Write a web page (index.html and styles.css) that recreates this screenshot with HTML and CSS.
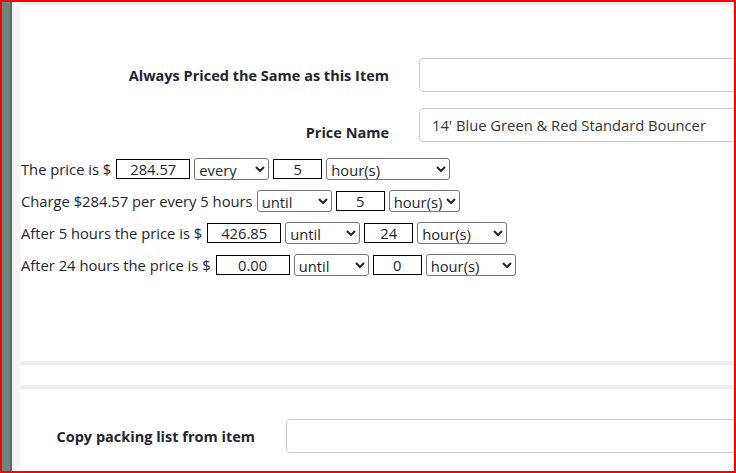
FILE: index.html
```html
<!DOCTYPE html>
<html lang="en">
<head>
    <meta charset="UTF-8">
    <title>Item Pricing</title>
    <link rel="stylesheet" href="styles.css">
</head>
<body>
    <div class="frame">
        <div class="rail"></div>
        <div class="main">
            <div class="panel">
                <div class="field-grid">
                    <label class="field-label">Always Priced the Same as this Item</label>
                    <input class="wide-input" type="text" value="">
                    <label class="field-label low">Price Name</label>
                    <input class="wide-input" type="text" value="14' Blue Green &amp; Red Standard Bouncer">
                </div>

                <div class="rates">
                    <div class="rate-row">
                        <span>The price is $</span>
                        <input class="price" type="text" value="284.57">
                        <select class="sel-every"><option>every</option></select>
                        <input class="qty" type="text" value="5">
                        <select class="sel-unit-long"><option>hour(s)</option></select>
                    </div>
                    <div class="rate-row">
                        <span>Charge $284.57 per every 5 hours</span>
                        <select class="sel-every"><option>until</option></select>
                        <input class="qty" type="text" value="5">
                        <select class="sel-unit-auto"><option>hour(s)</option></select>
                    </div>
                    <div class="rate-row">
                        <span>After 5 hours the price is $</span>
                        <input class="price" type="text" value="426.85">
                        <select class="sel-every"><option>until</option></select>
                        <input class="qty" type="text" value="24">
                        <select class="sel-unit"><option>hour(s)</option></select>
                    </div>
                    <div class="rate-row">
                        <span>After 24 hours the price is $</span>
                        <input class="price" type="text" value="0.00">
                        <select class="sel-every"><option>until</option></select>
                        <input class="qty" type="text" value="0">
                        <select class="sel-unit"><option>hour(s)</option></select>
                    </div>
                </div>

                <hr class="divider first">
                <hr class="divider">

                <div class="packing">
                    <label class="field-label">Copy packing list from item</label>
                    <input class="wide-input" type="text" value="">
                </div>
            </div>
        </div>
    </div>
</body>
</html>
```

FILE: styles.css
```css
body {
    margin: 0;
    padding: 0;
    font-family: "Open Sans", sans-serif;
    color: #222531;
}

.frame {
    width: 736px;
    height: 473px;
    box-sizing: border-box;
    border: 2px solid #ff0000;
    display: flex;
    overflow: hidden;
}

.rail {
    width: 8px;
    flex-shrink: 0;
    background-color: #71837d;
    border-right: 2px solid #5b6c67;
}

.main {
    flex-grow: 1;
    padding-left: 9px;
    background: linear-gradient(to right, #efefef, #ffffff 20px);
    overflow: hidden;
}

.panel {
    background-color: #fff;
    border-top: 3px solid #eeeeee;
    height: 100%;
}

.field-grid {
    display: grid;
    grid-template-columns: 368px 360px;
    column-gap: 30px;
    row-gap: 16px;
    margin-top: 53px;
    align-items: center;
}

.field-label {
    font-size: 14.5px;
    font-weight: 700;
    text-align: right;
}

.field-label.low {
    padding-top: 14px;
}

.wide-input {
    box-sizing: border-box;
    height: 34px;
    border: 1px solid #cccccc;
    border-radius: 4px;
    padding: 0 12px;
    font-family: inherit;
    font-size: 14.75px;
    color: #333;
}

.rates {
    margin-top: 16px;
}

.rate-row {
    display: flex;
    align-items: center;
    gap: 4px;
    height: 22px;
    margin-bottom: 10px;
    font-size: 14.75px;
}

.rate-row input {
    box-sizing: border-box;
    height: 20px;
    border: 1px solid #000;
    padding: 0;
    text-align: center;
    font-family: inherit;
    font-size: 14.75px;
    color: #222531;
}

.rate-row select {
    box-sizing: border-box;
    height: 22px;
    border: 1px solid #767676;
    border-radius: 3px;
    font-family: inherit;
    font-size: 14.75px;
    color: #222531;
    background-color: #fff;
}

.price {
    width: 74px;
    margin-left: 1px;
}

.qty {
    width: 49px;
}

.sel-every {
    width: 75px;
}

.sel-unit-long {
    width: 124px;
}

.sel-unit {
    width: 90px;
}

.sel-unit-auto {
    width: 71px;
}

.divider {
    border: 0;
    height: 4px;
    background-color: #ededed;
    margin: 0;
}

.divider.first {
    margin-top: 85px;
    margin-bottom: 20px;
}

.packing {
    display: grid;
    grid-template-columns: 234px 460px;
    column-gap: 31px;
    align-items: center;
    margin-top: 30px;
}
```
